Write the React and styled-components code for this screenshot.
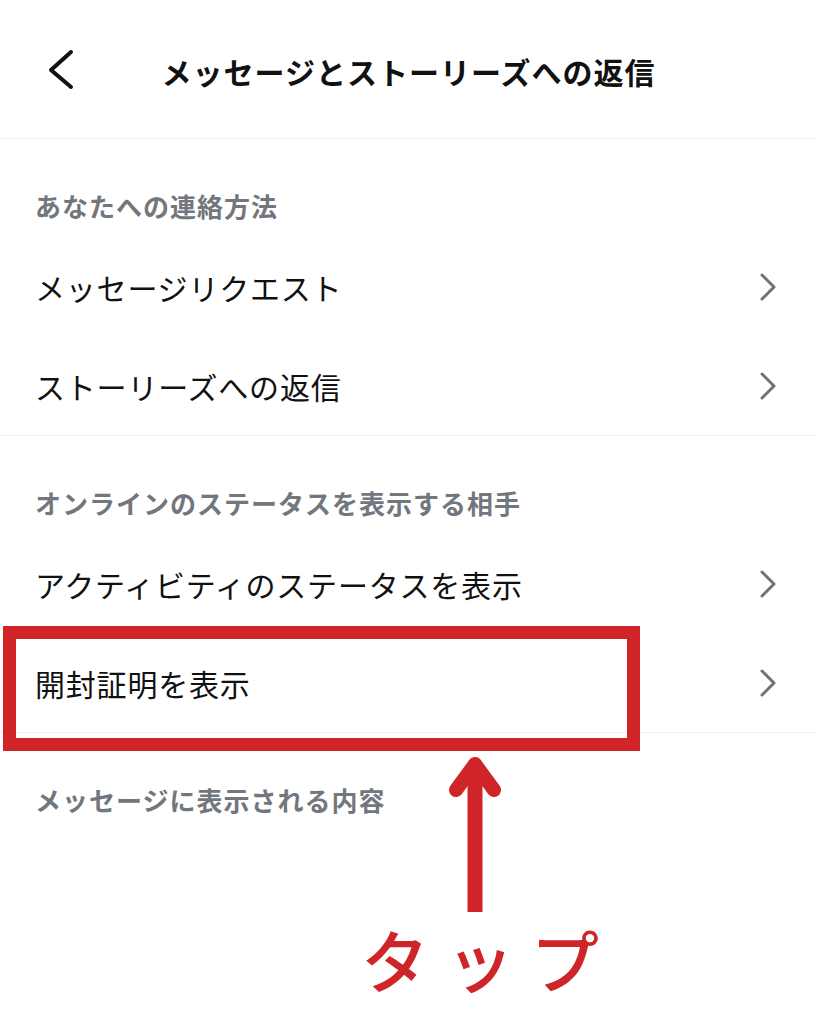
import React from "react";
import styled, { createGlobalStyle } from "styled-components";

const GlobalStyle = createGlobalStyle`
  body {
    margin: 0;
    background: #ffffff;
  }
`;

const RED = "#cf2428";

const sections = [
  {
    label: "あなたへの連絡方法",
    rows: ["メッセージリクエスト", "ストーリーズへの返信"],
  },
  {
    label: "オンラインのステータスを表示する相手",
    rows: ["アクティビティのステータスを表示", "開封証明を表示"],
  },
  {
    label: "メッセージに表示される内容",
    rows: [],
  },
];

const BackIcon = () => (
  <svg width="34" height="42" viewBox="0 0 34 42">
    <polyline
      points="28,3 8,21 28,38"
      fill="none"
      stroke="#111"
      strokeWidth="4"
      strokeLinecap="round"
      strokeLinejoin="round"
    />
  </svg>
);

const Chevron = () => (
  <svg width="20" height="30" viewBox="0 0 20 30">
    <polyline
      points="4,3 16,15 4,27"
      fill="none"
      stroke="#6e7379"
      strokeWidth="3"
      strokeLinecap="round"
      strokeLinejoin="round"
    />
  </svg>
);

// annotation arrow pointing up at the highlighted row
const UpArrow = () => (
  <svg width="70" height="170" viewBox="0 0 70 170">
    <line x1="35" y1="16" x2="35" y2="163" stroke={RED} strokeWidth="15" />
    <polyline
      points="16,41 35,15 54,41"
      fill="none"
      stroke={RED}
      strokeWidth="14"
      strokeLinecap="round"
      strokeLinejoin="round"
    />
  </svg>
);

const App = () => {
  return (
    <Page>
      <GlobalStyle />
      <Header>
        <BackButton>
          <BackIcon />
        </BackButton>
        <Title>メッセージとストーリーズへの返信</Title>
        <span />
      </Header>
      {sections.map((s) => (
        <Section key={s.label}>
          <Label>{s.label}</Label>
          {s.rows.map((r) =>
            r === "開封証明を表示" ? (
              <Highlight key={r}>
                <Row>
                  <RowText>{r}</RowText>
                  <Chevron />
                </Row>
                <RedBox />
                <Callout>
                  <UpArrow />
                  <TapText>タップ</TapText>
                </Callout>
              </Highlight>
            ) : (
              <Row key={r}>
                <RowText>{r}</RowText>
                <Chevron />
              </Row>
            )
          )}
        </Section>
      ))}
    </Page>
  );
};

export default App;

const Page = styled.div`
  width: 817px;
  min-height: 1024px;
  background: #ffffff;
  font-family: "Noto Sans CJK JP", "Noto Sans", sans-serif;
  overflow: hidden;
`;

const Header = styled.header`
  display: grid;
  grid-template-columns: 1fr auto 1fr;
  align-items: center;
  height: 139px;
  padding-top: 4px;
  box-sizing: border-box;
  border-bottom: 1px solid #efefef;
`;

const BackButton = styled.div`
  display: flex;
  align-items: center;
  padding-left: 43px;
  margin-top: -3px;
`;

const Title = styled.h1`
  margin: 0;
  font-size: 30px;
  font-weight: 700;
  color: #111111;
  letter-spacing: 1px;
  line-height: 40px;
`;

const Section = styled.section`
  & + & {
    border-top: 1px solid #efefef;
  }
`;

const Label = styled.div`
  padding: 50px 35px 14px;
  font-size: 26px;
  line-height: 34px;
  font-weight: 600;
  color: #72777d;
  letter-spacing: 1px;
`;

const Row = styled.div`
  display: flex;
  align-items: center;
  justify-content: space-between;
  height: 99px;
  padding: 0 39px 0 35px;
`;

const RowText = styled.span`
  font-size: 30px;
  color: #111111;
  letter-spacing: 0.8px;
`;

const Highlight = styled.div`
  position: relative;
`;

const RedBox = styled.div`
  position: absolute;
  left: 3px;
  top: -7px;
  width: 637px;
  height: 125px;
  box-sizing: border-box;
  border: 13px solid ${RED};
  pointer-events: none;
`;

const Callout = styled.div`
  position: absolute;
  left: 361px;
  top: 116px;
  display: flex;
  flex-direction: column;
  align-items: flex-start;
  pointer-events: none;
  svg {
    margin-left: 79px;
  }
`;

const TapText = styled.div`
  font-size: 68px;
  line-height: 80px;
  font-weight: 500;
  color: ${RED};
  letter-spacing: 17px;
  white-space: nowrap;
`;
